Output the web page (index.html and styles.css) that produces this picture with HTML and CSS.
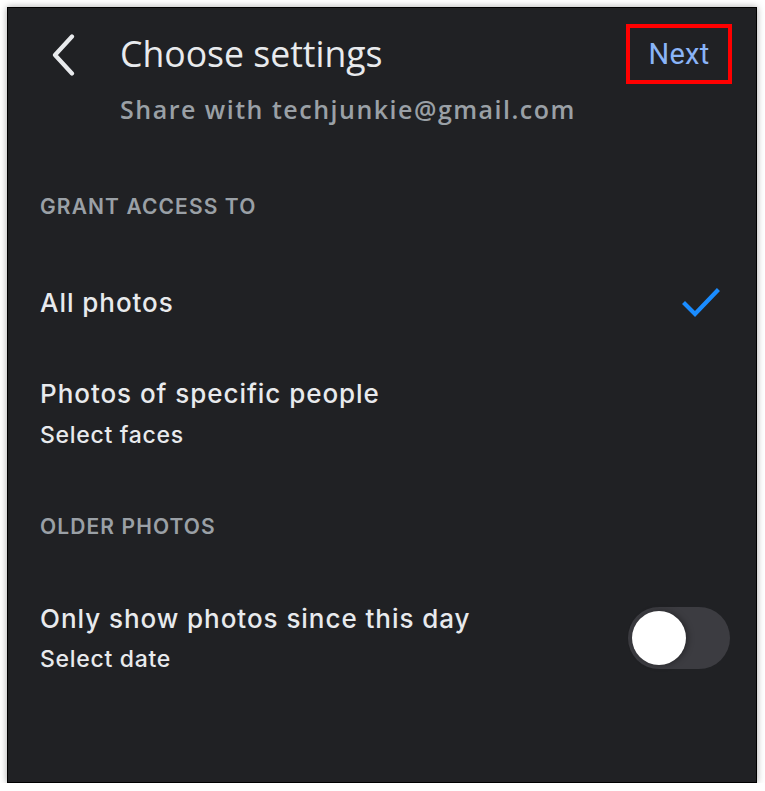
FILE: index.html
```html
<!DOCTYPE html>
<html>
<head>
<meta charset="utf-8">
<link rel="stylesheet" href="styles.css">
</head>
<body>
<div class="panel">
  <header class="header">
    <svg class="back" width="26" height="44" viewBox="0 0 26 44"><path d="M21 2.5 L4 21 L21 39.5" fill="none" stroke="#e8eaed" stroke-width="4.2" stroke-linecap="round" stroke-linejoin="round"/></svg>
    <div class="titles">
      <div class="title">Choose settings</div>
      <div class="subtitle">Share with techjunkie@gmail.com</div>
    </div>
    <div class="next-box"><span class="next">Next</span></div>
  </header>

  <div class="section-label grant">GRANT ACCESS TO</div>
  <div class="row all">
    <div class="row-title">All photos</div>
    <svg class="check" width="38" height="30" viewBox="0 0 38 30"><path d="M3 16 L13 26 L35 3" fill="none" stroke="#1a8cff" stroke-width="4.2" stroke-linecap="square"/></svg>
  </div>
  <div class="row people">
    <div>
      <div class="row-title">Photos of specific people</div>
      <div class="row-sub">Select faces</div>
    </div>
  </div>

  <div class="section-label older">OLDER PHOTOS</div>
  <div class="row since">
    <div>
      <div class="row-title">Only show photos since this day</div>
      <div class="row-sub">Select date</div>
    </div>
    <div class="toggle"><div class="knob"></div></div>
  </div>
</div>
</body>
</html>
```

FILE: styles.css
```css
html, body {
  margin: 0;
  padding: 0;
  background: #ffffff;
}
.panel {
  margin: 7px 0 0 7px;
  width: 750px;
  height: 776px;
  box-sizing: border-box;
  border: 1px solid #000;
  background: #202124;
  box-shadow: 0 0 7px rgba(0,0,0,0.35);
  font-family: Inter, "Noto Sans", sans-serif;
  color: #e8eaed;
}
.header {
  display: flex;
  align-items: flex-start;
  padding: 16px 0 0 43px;
}
.back {
  margin-top: 10px;
  flex: none;
}
.titles {
  margin-left: 43px;
  flex: 1;
}
.title {
  font-family: "Open Sans", sans-serif;
  font-size: 35.6px;
  line-height: 44px;
  margin-top: 7px;
  color: #e8eaed;
}
.subtitle {
  font-family: "Open Sans", sans-serif;
  font-weight: 600;
  font-size: 25px;
  line-height: 32px;
  margin-top: 18px;
  letter-spacing: 1.5px;
  color: #9aa0a6;
}
.next-box {
  flex: none;
  width: 106px;
  height: 60px;
  box-sizing: border-box;
  border: 4px solid #ff0000;
  display: flex;
  align-items: center;
  justify-content: center;
  margin-right: 24px;
}
.next {
  font-family: Roboto, sans-serif;
  font-size: 29px;
  color: #8ab4f8;
  letter-spacing: 0.3px;
}
.section-label {
  padding-left: 32px;
  font-size: 21px;
  font-weight: 600;
  letter-spacing: 1.1px;
  color: #9aa0a6;
  line-height: 24px;
}
.section-label.grant {
  margin-top: 70px;
}
.section-label.older {
  margin-top: 66px;
}
.row {
  display: flex;
  align-items: center;
  justify-content: space-between;
  padding: 0 26px 0 32px;
}
.row.all {
  margin-top: 68px;
}
.row.people {
  margin-top: 59px;
}
.row.since {
  margin-top: 64px;
}
.row-title {
  font-size: 26px;
  font-weight: 500;
  letter-spacing: 0.95px;
  line-height: 32px;
}
.row-sub {
  font-size: 23px;
  font-weight: 500;
  letter-spacing: 0.7px;
  line-height: 28px;
  margin-top: 10.5px;
}
.check {
  margin-right: 10px;
}
.toggle {
  width: 102px;
  height: 62px;
  border-radius: 31px;
  background: #3c3c41;
  box-sizing: border-box;
  padding: 4px;
  display: flex;
}
.knob {
  width: 54px;
  height: 54px;
  border-radius: 50%;
  background: #fff;
  box-shadow: 2px 0 6px rgba(0,0,0,0.35);
}
```
